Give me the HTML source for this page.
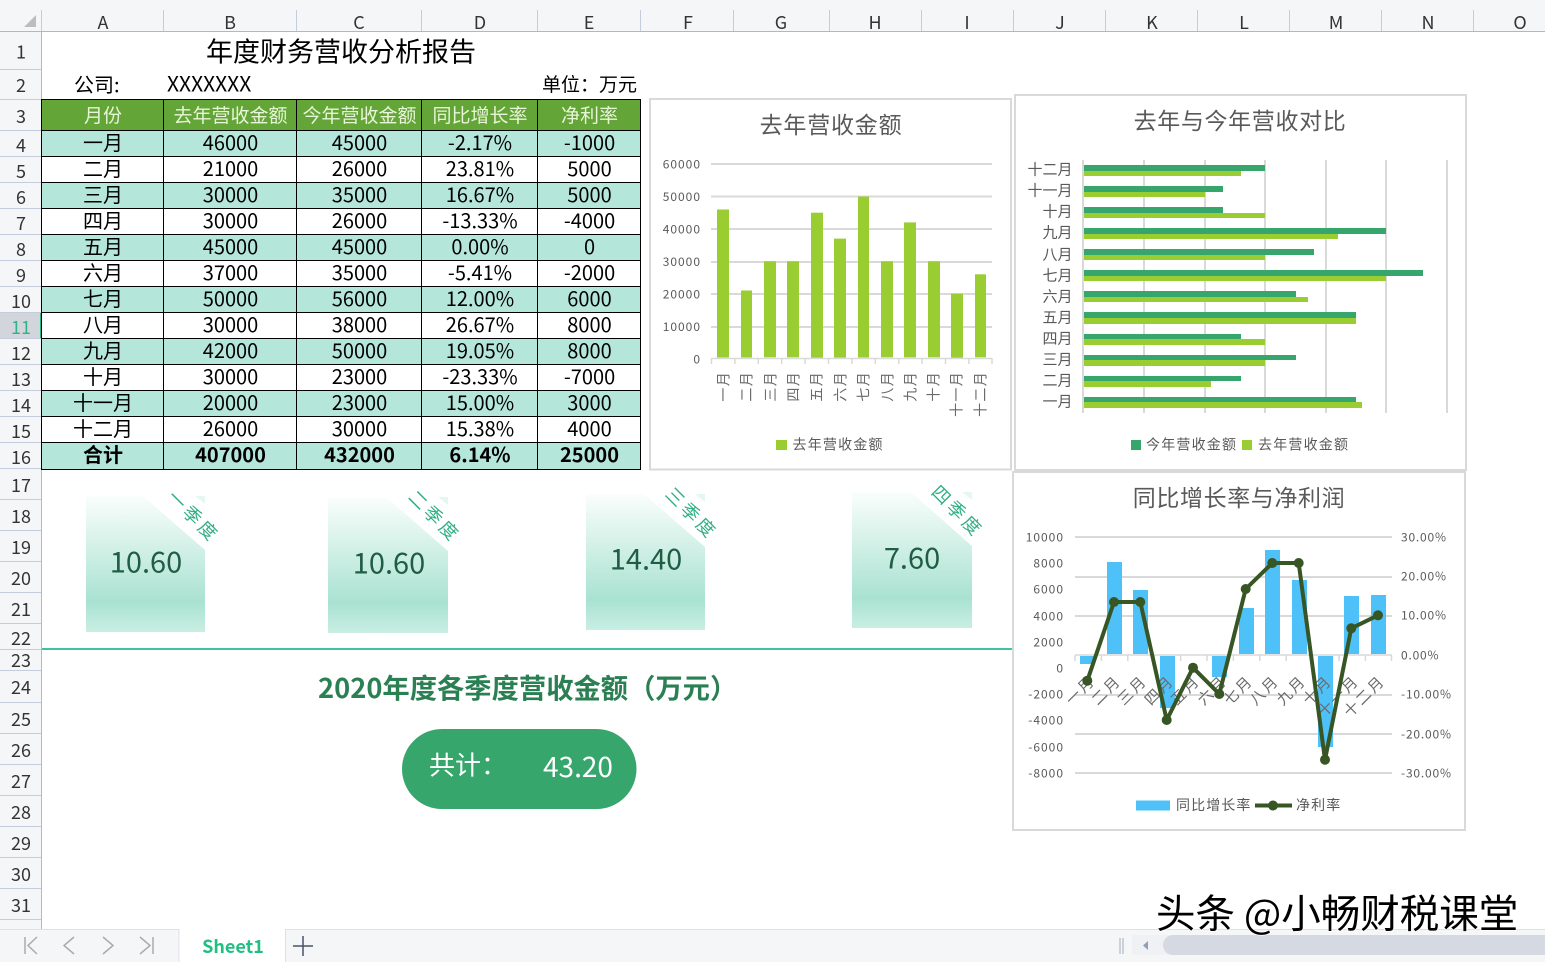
<!DOCTYPE html>
<html><head><meta charset="utf-8"><style>
html,body{margin:0;padding:0;background:#fff;width:1545px;height:962px;overflow:hidden}
body{position:relative;font-family:"Noto Sans CJK SC","Liberation Sans",sans-serif}
svg{position:absolute;left:0;top:0}
svg text{font-family:"Noto Sans CJK SC","Liberation Sans",sans-serif}
table{position:absolute;left:41px;top:99px;width:600px;border-collapse:collapse;table-layout:fixed;font-size:20px;color:#000}
td{border:1px solid #000;text-align:center;padding:0 0 3px 1px;height:22px;line-height:22px;overflow:hidden;white-space:nowrap}
tr.h td{background:#63A537;color:#E8F5D8;font-size:19px;height:30px;line-height:30px;padding:0 0 0 1px}
tr.b td{background:#B5E6DA}
tr.t td{font-weight:700;padding-bottom:4px;height:21px}
</style></head><body>
<svg width="1545" height="962" viewBox="0 0 1545 962">
<defs>
<linearGradient id="g" x1="0" y1="0" x2="0" y2="1"><stop offset="0" stop-color="#FAFEFC"/><stop offset=".78" stop-color="#A9E2D1"/><stop offset="1" stop-color="#C9EEE3"/></linearGradient>
</defs>
<!-- headers -->
<rect x="0" y="0" width="1545" height="31" fill="#F5F6F8"/>
<rect x="0" y="31" width="41" height="898" fill="#F5F6F8"/>
<rect x="0" y="312" width="41" height="26" fill="#D2D5DC"/>
<rect x="40" y="312" width="2" height="26" fill="#1FB88A"/>
<rect x="0" y="31" width="1545" height="1" fill="#AEB7CE"/>
<rect x="41" y="31" width="1" height="898" fill="#AEB7CE"/>
<polygon points="36,15 36,27 24,27" fill="#BDBDBD"/>
<g stroke="#C5CCDC" stroke-width="1">
<path d="M41.500 10V31M163.500 10V31M296.500 10V31M421.500 10V31M537.500 10V31M640.500 10V31M733.500 10V31M829.500 10V31M921.500 10V31M1013.500 10V31M1105.500 10V31M1197.500 10V31M1289.500 10V31M1381.500 10V31M1473.500 10V31"/>
<path d="M0 69.500H41M0 99.500H41M0 130.500H41M0 156.500H41M0 182.500H41M0 208.500H41M0 234.500H41M0 260.500H41M0 286.500H41M0 312.500H41M0 338.500H41M0 364.500H41M0 390.500H41M0 416.500H41M0 442.500H41M0 468.500H41M0 499.500H41M0 530.500H41M0 561.500H41M0 592.500H41M0 623.500H41M0 649.500H41M0 670.500H41M0 702.500H41M0 733.500H41M0 764.500H41M0 795.500H41M0 826.500H41M0 857.500H41M0 888.500H41M0 919.500H41"/>
</g>
<g font-size="18" fill="#333" text-anchor="middle" dominant-baseline="central">
<text x="103" y="22">A</text><text x="230" y="22">B</text><text x="359" y="22">C</text><text x="480" y="22">D</text><text x="589" y="22">E</text><text x="688" y="22">F</text><text x="781" y="22">G</text><text x="875" y="22">H</text><text x="967" y="22">I</text><text x="1060" y="22">J</text><text x="1152" y="22">K</text><text x="1244" y="22">L</text><text x="1336" y="22">M</text><text x="1428" y="22">N</text><text x="1520" y="22">O</text>
<text x="21" y="51.500">1</text><text x="21" y="85">2</text><text x="21" y="116">3</text><text x="21" y="145">4</text><text x="21" y="171">5</text><text x="21" y="197">6</text><text x="21" y="223">7</text><text x="21" y="249">8</text><text x="21" y="275">9</text><text x="21" y="301">10</text><text x="21" y="327" fill="#2DB58A">11</text><text x="21" y="353">12</text><text x="21" y="379">13</text><text x="21" y="405">14</text><text x="21" y="431">15</text><text x="21" y="457">16</text><text x="21" y="485">17</text><text x="21" y="516">18</text><text x="21" y="547">19</text><text x="21" y="578">20</text><text x="21" y="609">21</text><text x="21" y="638">22</text><text x="21" y="660">23</text><text x="21" y="687">24</text><text x="21" y="719">25</text><text x="21" y="750">26</text><text x="21" y="781">27</text><text x="21" y="812">28</text><text x="21" y="843">29</text><text x="21" y="874">30</text><text x="21" y="905">31</text>
</g>
<!-- sheet titles -->
<text x="341" y="50" font-size="27" fill="#000" text-anchor="middle" dominant-baseline="central">年度财务营收分析报告</text>
<text x="74" y="83.500" font-size="20" fill="#000" dominant-baseline="central">公司:</text>
<text x="167" y="83.500" font-size="21" fill="#000" dominant-baseline="central">XXXXXXX</text>
<text x="637" y="83.500" font-size="19" fill="#000" text-anchor="end" dominant-baseline="central">单位：万元</text>

<!-- cards -->
<g fill="url(#g)">
<polygon points="86,496 143,496 205,550 205,632 86,632"/><polygon points="195,496 205,496 205,504" fill="#E6F7F1"/>
<polygon points="328,497 386,497 448,551 448,633 328,633"/><polygon points="438,497 448,497 448,505" fill="#E6F7F1"/>
<polygon points="586,494 644,494 705,547 705,630 586,630"/><polygon points="695,494 705,494 705,502" fill="#E6F7F1"/>
<polygon points="852,492 911,492 972,546 972,628 852,628"/><polygon points="962,492 972,492 972,500" fill="#E6F7F1"/>
</g>
<g font-size="29" fill="#1F5D45" text-anchor="middle" dominant-baseline="central">
<text x="146" y="560.500">10.60</text><text x="389" y="561.500">10.60</text><text x="646" y="557.500">14.40</text><text x="912" y="556.500">7.60</text>
</g>
<g font-size="18" fill="#2FAE85" text-anchor="middle" dominant-baseline="central" letter-spacing="3.500">
<text transform="translate(194,516) rotate(45)">一季度</text>
<text transform="translate(435,516) rotate(45)">二季度</text>
<text transform="translate(692,513) rotate(45)">三季度</text>
<text transform="translate(958,511) rotate(45)">四季度</text>
</g>
<rect x="42" y="648" width="972" height="2" fill="#43C0A0"/>
<text x="318" y="686" font-size="27.300" font-weight="700" fill="#2A7F53" dominant-baseline="central">2020年度各季度营收金额（万元）</text>
<rect x="402" y="729" width="234.500" height="80" rx="40" fill="#36A66D"/>
<text x="429" y="764" font-size="26" fill="#fff" dominant-baseline="central">共计：</text>
<text x="543" y="766" font-size="28" fill="#fff" dominant-baseline="central">43.20</text>

<!-- chart 1 -->
<rect x="650" y="99" width="361" height="370.500" fill="#fff" stroke="#D9D9D9" stroke-width="2"/>
<text x="831" y="123" font-size="23" letter-spacing="0.800" fill="#595959" text-anchor="middle" dominant-baseline="central">去年营收金额</text>
<path d="M711 164H992M711 196.500H992M711 229H992M711 262H992M711 294H992M711 327H992" stroke="#D9D9D9" stroke-width="2" fill="none"/>
<path d="M711 358.500H992M711.500 358V364M734.900 358V364M758.300 358V364M781.700 358V364M805.100 358V364M828.500 358V364M851.900 358V364M875.300 358V364M898.700 358V364M922.100 358V364M945.500 358V364M968.900 358V364M992 358V364" stroke="#D9D9D9" stroke-width="1.500" fill="none"/>
<g fill="#9ACD32">
<rect x="717" y="209.500" width="12" height="148"/><rect x="741" y="290.500" width="11" height="67"/><rect x="764" y="261.300" width="12" height="96"/><rect x="787" y="261.300" width="12" height="96"/><rect x="811" y="212.700" width="12" height="145"/><rect x="834" y="238.600" width="12" height="119"/><rect x="858" y="196.500" width="11" height="161"/><rect x="881" y="261.300" width="12" height="96"/><rect x="904" y="222.400" width="12" height="135"/><rect x="928" y="261.300" width="12" height="96"/><rect x="951" y="293.700" width="12" height="64"/><rect x="975" y="274.300" width="11" height="83"/>
</g>
<g font-size="12" letter-spacing="1" fill="#595959" text-anchor="end" dominant-baseline="central">
<text x="701" y="164">60000</text><text x="701" y="196.500">50000</text><text x="701" y="229">40000</text><text x="701" y="261.500">30000</text><text x="701" y="294">20000</text><text x="701" y="326.500">10000</text><text x="701" y="359">0</text>
</g>
<g font-size="14" letter-spacing="1.300" fill="#6A6A6A" text-anchor="end" dominant-baseline="central">
<text transform="translate(723.500,371) rotate(-90)">一月</text><text transform="translate(746.500,371) rotate(-90)">二月</text><text transform="translate(770.500,371) rotate(-90)">三月</text><text transform="translate(793.500,371) rotate(-90)">四月</text><text transform="translate(816.500,371) rotate(-90)">五月</text><text transform="translate(840.500,371) rotate(-90)">六月</text><text transform="translate(863.500,371) rotate(-90)">七月</text><text transform="translate(887.500,371) rotate(-90)">八月</text><text transform="translate(910.500,371) rotate(-90)">九月</text><text transform="translate(933.500,371) rotate(-90)">十月</text><text transform="translate(956.500,371) rotate(-90)">十一月</text><text transform="translate(980.500,371) rotate(-90)">十二月</text>
</g>
<rect x="776" y="440" width="11" height="10" fill="#9ACD32"/>
<text x="792.500" y="444.500" font-size="14" letter-spacing="1.200" fill="#595959" dominant-baseline="central">去年营收金额</text>

<!-- chart 2 -->
<rect x="1015" y="95" width="451" height="375" fill="#fff" stroke="#D9D9D9" stroke-width="2"/>
<text x="1240" y="119" font-size="23" letter-spacing="0.650" fill="#595959" text-anchor="middle" dominant-baseline="central">去年与今年营收对比</text>
<path d="M1083 160V413M1144 160V413M1205 160V413M1265 160V413M1326 160V413M1386 160V413M1447 160V413" stroke="#D9D9D9" stroke-width="2" fill="none"/>
<g fill="#36A66D">
<rect x="1084" y="165" width="181" height="6"/><rect x="1084" y="186" width="139" height="6"/><rect x="1084" y="207" width="139" height="6"/><rect x="1084" y="228" width="302" height="6"/><rect x="1084" y="249" width="230" height="6"/><rect x="1084" y="270" width="339" height="6"/><rect x="1084" y="291" width="212" height="6"/><rect x="1084" y="312" width="272" height="6"/><rect x="1084" y="334" width="157" height="5"/><rect x="1084" y="355" width="212" height="5"/><rect x="1084" y="376" width="157" height="5"/><rect x="1084" y="397" width="272" height="5"/>
</g>
<g fill="#9ACD32">
<rect x="1084" y="171" width="157" height="5"/><rect x="1084" y="192" width="121" height="5"/><rect x="1084" y="213" width="181" height="5"/><rect x="1084" y="234" width="254" height="5"/><rect x="1084" y="255" width="181" height="5"/><rect x="1084" y="276" width="302" height="5"/><rect x="1084" y="297" width="224" height="5"/><rect x="1084" y="318" width="272" height="6"/><rect x="1084" y="339" width="181" height="6"/><rect x="1084" y="360" width="181" height="6"/><rect x="1084" y="381" width="127" height="6"/><rect x="1084" y="402" width="278" height="6"/>
</g>
<g font-size="15" fill="#595959" text-anchor="end" dominant-baseline="central">
<text x="1072.500" y="169">十二月</text><text x="1072.500" y="190">十一月</text><text x="1072.500" y="211">十月</text><text x="1072.500" y="232">九月</text><text x="1072.500" y="254">八月</text><text x="1072.500" y="275">七月</text><text x="1072.500" y="296">六月</text><text x="1072.500" y="317">五月</text><text x="1072.500" y="338">四月</text><text x="1072.500" y="359">三月</text><text x="1072.500" y="380">二月</text><text x="1072.500" y="401">一月</text>
</g>
<rect x="1131" y="440" width="10" height="10" fill="#36A66D"/>
<rect x="1242" y="440" width="10" height="10" fill="#9ACD32"/>
<g font-size="14" letter-spacing="1.200" fill="#595959" dominant-baseline="central">
<text x="1146" y="444.500">今年营收金额</text><text x="1258" y="444.500">去年营收金额</text>
</g>

<!-- chart 3 -->
<rect x="1013" y="472" width="452" height="358" fill="#fff" stroke="#D9D9D9" stroke-width="2"/>
<text x="1239" y="496" font-size="23" letter-spacing="0.600" fill="#595959" text-anchor="middle" dominant-baseline="central">同比增长率与净利润</text>
<path d="M1075 537H1392M1075 577H1392M1075 616H1392M1075 695H1392M1075 734H1392M1075 773H1392" stroke="#D9D9D9" stroke-width="2" fill="none"/>
<path d="M1075 655H1392M1075 655V661M1101.400 655V661M1127.800 655V661M1154.200 655V661M1180.600 655V661M1207 655V661M1233.400 655V661M1259.800 655V661M1286.200 655V661M1312.600 655V661M1339 655V661M1365.400 655V661M1391.500 655V661" stroke="#D9D9D9" stroke-width="1.500" fill="none"/>
<g fill="#4FC1F9">
<rect x="1080" y="656" width="15" height="8"/><rect x="1107" y="562" width="15" height="92"/><rect x="1133" y="590" width="15" height="64"/><rect x="1160" y="656" width="15" height="52"/><rect x="1212" y="656" width="15" height="21"/><rect x="1239" y="608" width="15" height="46"/><rect x="1265" y="550" width="15" height="104"/><rect x="1292" y="580" width="15" height="74"/><rect x="1318" y="656" width="15" height="91"/><rect x="1344" y="596" width="15" height="58"/><rect x="1371" y="595" width="15" height="59"/>
</g>
<g font-size="15" fill="#6A6A6A" text-anchor="end" dominant-baseline="central" letter-spacing="2">
<text transform="translate(1092,678) rotate(-45)">一月</text><text transform="translate(1118,678) rotate(-45)">二月</text><text transform="translate(1144,678) rotate(-45)">三月</text><text transform="translate(1171,678) rotate(-45)">四月</text><text transform="translate(1197,678) rotate(-45)">五月</text><text transform="translate(1224,678) rotate(-45)">六月</text><text transform="translate(1250,678) rotate(-45)">七月</text><text transform="translate(1276,678) rotate(-45)">八月</text><text transform="translate(1303,678) rotate(-45)">九月</text><text transform="translate(1329,678) rotate(-45)">十月</text><text transform="translate(1356,678) rotate(-45)">十一月</text><text transform="translate(1382,678) rotate(-45)">十二月</text>
</g>
<polyline points="1087.300,680.700 1114,602 1140.300,602 1166.700,720 1193,667.700 1219.300,694 1245.700,589 1272.300,563 1298.700,563 1325,759.700 1351.300,628.300 1378,615.300" fill="none" stroke="#375623" stroke-width="4" stroke-linejoin="round"/>
<g fill="#375623">
<circle cx="1087.300" cy="680.700" r="5"/><circle cx="1114" cy="602" r="5"/><circle cx="1140.300" cy="602" r="5"/><circle cx="1166.700" cy="720" r="5"/><circle cx="1193" cy="667.700" r="5"/><circle cx="1219.300" cy="694" r="5"/><circle cx="1245.700" cy="589" r="5"/><circle cx="1272.300" cy="563" r="5"/><circle cx="1298.700" cy="563" r="5"/><circle cx="1325" cy="759.700" r="5"/><circle cx="1351.300" cy="628.300" r="5"/><circle cx="1378" cy="615.300" r="5"/>
</g>
<g font-size="12" letter-spacing="1" fill="#595959" text-anchor="end" dominant-baseline="central">
<text x="1064" y="537">10000</text><text x="1064" y="563">8000</text><text x="1064" y="589">6000</text><text x="1064" y="616">4000</text><text x="1064" y="642">2000</text><text x="1064" y="668">0</text><text x="1064" y="694">-2000</text><text x="1064" y="720">-4000</text><text x="1064" y="747">-6000</text><text x="1064" y="773">-8000</text>
</g>
<g font-size="12" letter-spacing="0.800" fill="#595959" dominant-baseline="central">
<text x="1401" y="537">30.00%</text><text x="1401" y="576">20.00%</text><text x="1401" y="615">10.00%</text><text x="1401" y="655">0.00%</text><text x="1401" y="694">-10.00%</text><text x="1401" y="734">-20.00%</text><text x="1401" y="773">-30.00%</text>
</g>
<rect x="1136" y="800.500" width="34" height="10" fill="#4FC1F9"/>
<path d="M1255 805.500H1292" stroke="#375623" stroke-width="4"/><circle cx="1273" cy="805.500" r="5" fill="#375623"/>
<g font-size="14" letter-spacing="1.100" fill="#595959" dominant-baseline="central">
<text x="1176" y="805">同比增长率</text><text x="1296" y="805">净利率</text>
</g>

<!-- bottom bar -->
<rect x="0" y="929" width="1545" height="33" fill="#F5F6F8"/>
<rect x="0" y="929" width="1545" height="1" fill="#DDE0E6"/>
<rect x="179" y="929" width="107" height="33" fill="#fff"/>
<path d="M179 929V962M285.500 929V962" stroke="#DDE0E6" fill="none"/>
<text x="233" y="946" font-size="18" font-weight="700" fill="#22BF83" text-anchor="middle" dominant-baseline="central">Sheet1</text>
<g stroke="#ABABAB" stroke-width="1.500" fill="none">
<path d="M25 937V954M37 937L28 945.500L37 954"/>
<path d="M74 937L64 945.500L74 954"/>
<path d="M103 937L113 945.500L103 954"/>
<path d="M140 937L150 945.500L140 954M153 937V954"/>
<path d="M1120 938V954M1123 938V954" stroke="#BFC3CC"/>
</g>
<path d="M293 946H313M303 936V956" stroke="#4A5266" stroke-width="1.500" fill="none"/>
<rect x="1132" y="935" width="413" height="20" fill="#EFF1F4"/>
<polygon points="1148,941 1148,950 1143,945.500" fill="#8FA0B5"/>
<path d="M1173 935H1545V955H1173A10 10 0 0 1 1173 935Z" fill="#D5D9E2"/>
<text x="1156" y="911.500" font-size="39.500" fill="#000" dominant-baseline="central" style="paint-order:stroke;stroke:#fff;stroke-width:1.500px">头条 @小畅财税课堂</text>
</svg>
<table>
<colgroup><col style="width:122px"><col style="width:133px"><col style="width:125px"><col style="width:116px"><col style="width:103px"></colgroup>
<tr class="h"><td>月份</td><td>去年营收金额</td><td>今年营收金额</td><td>同比增长率</td><td>净利率</td></tr>
<tr class="b"><td>一月</td><td>46000</td><td>45000</td><td>-2.17%</td><td>-1000</td></tr>
<tr><td>二月</td><td>21000</td><td>26000</td><td>23.81%</td><td>5000</td></tr>
<tr class="b"><td>三月</td><td>30000</td><td>35000</td><td>16.67%</td><td>5000</td></tr>
<tr><td>四月</td><td>30000</td><td>26000</td><td>-13.33%</td><td>-4000</td></tr>
<tr class="b"><td>五月</td><td>45000</td><td>45000</td><td>0.00%</td><td>0</td></tr>
<tr><td>六月</td><td>37000</td><td>35000</td><td>-5.41%</td><td>-2000</td></tr>
<tr class="b"><td>七月</td><td>50000</td><td>56000</td><td>12.00%</td><td>6000</td></tr>
<tr><td>八月</td><td>30000</td><td>38000</td><td>26.67%</td><td>8000</td></tr>
<tr class="b"><td>九月</td><td>42000</td><td>50000</td><td>19.05%</td><td>8000</td></tr>
<tr><td>十月</td><td>30000</td><td>23000</td><td>-23.33%</td><td>-7000</td></tr>
<tr class="b"><td>十一月</td><td>20000</td><td>23000</td><td>15.00%</td><td>3000</td></tr>
<tr><td>十二月</td><td>26000</td><td>30000</td><td>15.38%</td><td>4000</td></tr>
<tr class="b t"><td>合计</td><td>407000</td><td>432000</td><td>6.14%</td><td>25000</td></tr>
</table>
</body></html>
